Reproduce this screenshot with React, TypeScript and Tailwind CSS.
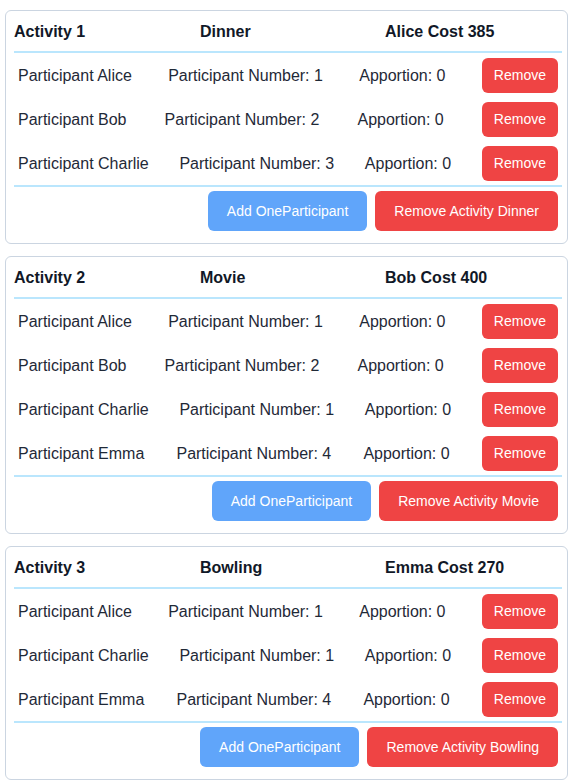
import React from 'react'

interface Participant {
  name: string
  number: number
  apportion: number
}

interface Activity {
  id: number
  title: string
  payer: string
  cost: number
  participants: Participant[]
}

const activities: Activity[] = [
  {
    id: 1,
    title: 'Dinner',
    payer: 'Alice',
    cost: 385,
    participants: [
      { name: 'Alice', number: 1, apportion: 0 },
      { name: 'Bob', number: 2, apportion: 0 },
      { name: 'Charlie', number: 3, apportion: 0 },
    ],
  },
  {
    id: 2,
    title: 'Movie',
    payer: 'Bob',
    cost: 400,
    participants: [
      { name: 'Alice', number: 1, apportion: 0 },
      { name: 'Bob', number: 2, apportion: 0 },
      { name: 'Charlie', number: 1, apportion: 0 },
      { name: 'Emma', number: 4, apportion: 0 },
    ],
  },
  {
    id: 3,
    title: 'Bowling',
    payer: 'Emma',
    cost: 270,
    participants: [
      { name: 'Alice', number: 1, apportion: 0 },
      { name: 'Charlie', number: 1, apportion: 0 },
      { name: 'Emma', number: 4, apportion: 0 },
    ],
  },
]

function ActivityCard({ activity }: { activity: Activity }) {
  return (
    <div className="ml-[5px] mb-3 w-[563px] rounded-md border border-[#cbd5e1] bg-white pt-2 pb-2 pl-2 pr-[5px]">
      {/* Header */}
      <div className="grid grid-cols-[186px_185px_1fr] border-b-2 border-[#bae6fd] pt-px pb-[7px] text-base leading-6 font-bold text-[#111827]">
        <span>Activity {activity.id}</span>
        <span>{activity.title}</span>
        <span>
          {activity.payer} Cost {activity.cost}
        </span>
      </div>

      {/* Participants */}
      {activity.participants.map((p, i) => (
        <div key={i} className="flex h-11 items-center justify-between px-1 text-base text-[#1f2937]">
          <span className="pt-0.5">Participant {p.name}</span>
          <span className="pt-0.5">Participant Number: {p.number}</span>
          <span className="pt-0.5">Apportion: {p.apportion}</span>
          <button className="h-[35px] rounded-md bg-[#ef4444] px-3 text-sm text-white">Remove</button>
        </div>
      ))}

      {/* Footer */}
      <div className="flex justify-end gap-2 border-t-2 border-[#bae6fd] px-1 py-1">
        <button className="h-10 rounded-md bg-[#60a5fa] px-[19px] text-sm text-white">Add OneParticipant</button>
        <button className="h-10 rounded-md bg-[#ef4444] px-[19px] text-sm text-white">
          Remove Activity {activity.title}
        </button>
      </div>
    </div>
  )
}

export default function App() {
  return (
    <div className="min-h-screen bg-white pt-[10px]" style={{ fontFamily: '"Liberation Sans", Arial, sans-serif' }}>
      {activities.map((a) => (
        <ActivityCard key={a.id} activity={a} />
      ))}
    </div>
  )
}
